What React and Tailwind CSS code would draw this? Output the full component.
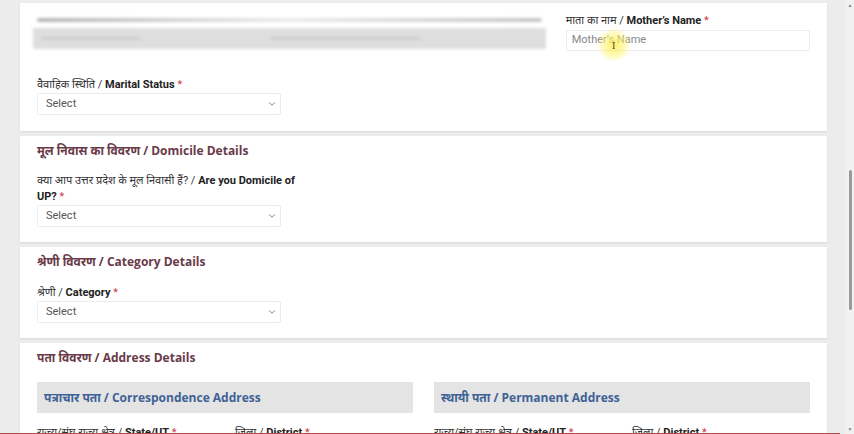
import React from 'react'
import { ChevronDown } from 'lucide-react'

const hindi = "font-['Roboto','Noto_Sans','Noto_Sans_Devanagari',sans-serif]"

const Label = ({ hi, en, className = '' }) => (
  <div className={`text-[11px] leading-[16px] text-[#333] ${className}`}>
    <span>{hi} / </span>
    <span className="font-bold text-[#222]">{en}</span>
    <span className="text-[#d0334b]"> *</span>
  </div>
)

const Select = () => (
  <div className="h-[22px] w-[244px] border border-[#ececec] rounded-[2px] bg-white flex items-center justify-between pl-[8px] pr-[3px]">
    <span className="text-[11px] text-[#555]">Select</span>
    <ChevronDown size={10} strokeWidth={2} className="text-[#666]" />
  </div>
)

const Heading = ({ hi, en }) => (
  <h2 className="text-[12px] leading-[16px] font-bold text-[#6a3a48] font-['Open_Sans','Noto_Sans',sans-serif]">
    {hi} / {en}
  </h2>
)

const Card = ({ className = '', children }) => (
  <div className={`bg-white shadow-[0_1px_2px_rgba(0,0,0,0.08)] px-[17px] ${className}`}>{children}</div>
)

const SubBox = ({ text }) => (
  <div className="h-[31px] bg-[#e4e4e4] flex items-center px-[7px]">
    <span className="text-[12px] font-bold text-[#3f6296] font-['Open_Sans','Noto_Sans',sans-serif]">{text}</span>
  </div>
)

export default function App() {
  return (
    <div className={`relative w-[854px] h-[434px] overflow-hidden bg-[#ececec] flex ${hindi}`}>
      <div className="flex-1 pl-[20px] pr-[19px] pt-[3px] flex flex-col gap-[5px]">
        {/* Personal details (tail) */}
        <Card className="pt-[10px] pb-[16px] h-[128px]">
          <div className="grid grid-cols-3 gap-x-[20px]">
            <div className="col-span-2 -ml-[4px] pt-[5px] blur-[1.5px]">
              <div className="h-[4px] mx-[4px] bg-gradient-to-r from-[#b5b5b5] via-[#ececec] to-[#c4c4c4] rounded-full" />
              <div className="mt-[6px] h-[21px] bg-[#dedede] flex items-center px-[8px]">
                <div className="h-[3px] w-[100px] bg-[#cfcfcf]" />
                <div className="ml-[130px] h-[3px] w-[150px] bg-[#cdcdcd]" />
              </div>
            </div>
            <div>
              <Label hi="माता का नाम" en="Mother’s Name" />
              <div className="mt-[1px] h-[21px] border border-[#ececec] rounded-[2px] flex items-center px-[5px]">
                <span className="text-[11px] text-[#888]">Mother’s Name</span>
              </div>
            </div>
          </div>
          <div className="mt-[26px]">
            <Label hi="वैवाहिक स्थिति" en="Marital Status" />
            <Select />
          </div>
        </Card>

        {/* Domicile */}
        <Card className="pt-[7px] pb-[16px] h-[106px]">
          <Heading hi="मूल निवास का विवरण" en="Domicile Details" />
          <div className="mt-[14px]">
            <Label hi="क्या आप उत्तर प्रदेश के मूल निवासी हैं?" en="Are you Domicile of UP?" className="w-[264px]" />
            <Select />
          </div>
        </Card>

        {/* Category */}
        <Card className="pt-[7px] pb-[16px] h-[91px]">
          <Heading hi="श्रेणी विवरण" en="Category Details" />
          <div className="mt-[15px]">
            <Label hi="श्रेणी" en="Category" />
            <Select />
          </div>
        </Card>

        {/* Address */}
        <Card className="pt-[7px] flex-1">
          <Heading hi="पता विवरण" en="Address Details" />
          <div className="mt-[16px] grid grid-cols-2 gap-x-[21px]">
            <div>
              <SubBox text="पत्राचार पता / Correspondence Address" />
              <div className="mt-[12px] grid grid-cols-2 gap-x-[20px]">
                <Label hi="राज्य/संघ राज्य क्षेत्र" en="State/UT" />
                <Label hi="जिला" en="District" />
              </div>
            </div>
            <div>
              <SubBox text="स्थायी पता / Permanent Address" />
              <div className="mt-[12px] grid grid-cols-2 gap-x-[20px]">
                <Label hi="राज्य/संघ राज्य क्षेत्र" en="State/UT" />
                <Label hi="जिला" en="District" />
              </div>
            </div>
          </div>
        </Card>
      </div>

      {/* Scrollbar */}
      <div className="w-[8px] bg-[#f1f1f1] flex flex-col items-center">
        <span className="text-[5px] leading-[10px] text-[#888]">▲</span>
        <div className="mt-[160px] h-[140px] w-[3px] rounded-full bg-[#9a9a9a]" />
        <div className="flex-1" />
        <span className="text-[5px] leading-[10px] text-[#888]">▼</span>
      </div>

      {/* Mouse pointer highlight */}
      <div className="absolute left-[597px] top-[28px] w-[34px] h-[34px] rounded-full bg-[radial-gradient(circle,rgba(255,238,70,0.8)_0%,rgba(255,245,110,0.5)_45%,rgba(255,255,160,0)_72%)]" />
      <span className="absolute left-[612px] top-[40px] text-[10px] leading-[12px] text-[#444] font-['Liberation_Serif',serif]">I</span>

      {/* Video progress line */}
      <div className="absolute left-0 right-[14px] bottom-0 h-[1px] bg-[#b44a4a]" />
    </div>
  )
}
